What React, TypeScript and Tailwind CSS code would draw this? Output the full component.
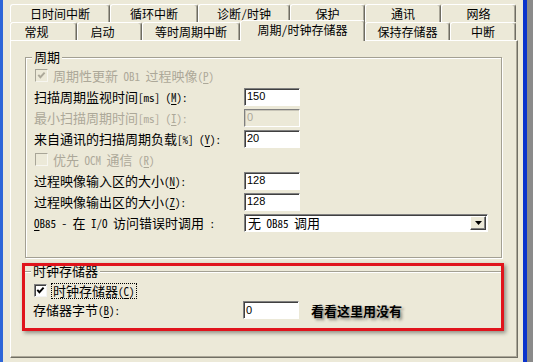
import React from "react";

const U = ({ c }: { c: string }) => (
  <span className="underline decoration-1 underline-offset-[2px]">{c}</span>
);

const L = ({ children }: { children: React.ReactNode }) => (
  <span className="text-[11px]">{children}</span>
);

function Check({ disabled, checked }: { disabled?: boolean; checked?: boolean }) {
  return (
    <span
      className={
        disabled
          ? "flex h-[13px] w-[13px] shrink-0 items-center justify-center border border-t-[#A8A597] border-l-[#A8A597] border-r-[#F7F6F0] border-b-[#F7F6F0] bg-[#ECE9D8]"
          : "flex h-[13px] w-[13px] shrink-0 items-center justify-center border border-t-[#808080] border-l-[#808080] border-r-[#F4F4F4] border-b-[#F4F4F4] bg-white shadow-[inset_1px_1px_0_#404040]"
      }
    >
      {checked && (
        <svg width="9" height="9" viewBox="0 0 9 9">
          <path
            d="M1.3 3.8 L3.4 6.2 L7.6 1.6"
            fill="none"
            stroke={disabled ? "#ACA899" : "#000000"}
            strokeWidth="1.9"
          />
        </svg>
      )}
    </span>
  );
}

function Field({ value, disabled }: { value: string; disabled?: boolean }) {
  return (
    <div
      className={
        disabled
          ? "flex h-[18px] w-[56px] items-center border border-t-[#808080] border-l-[#808080] border-r-[#FFFFFF] border-b-[#FFFFFF] bg-[#ECE9D8] pl-[2px] font-['Liberation_Sans',sans-serif] text-[11px] text-[#ACA899] shadow-[inset_1px_1px_0_#C8C5B8]"
          : "flex h-[18px] w-[56px] items-center border border-t-[#808080] border-l-[#808080] border-r-[#FFFFFF] border-b-[#FFFFFF] bg-white pl-[2px] font-['Liberation_Sans',sans-serif] text-[11px] text-black shadow-[inset_1px_1px_0_#404040]"
      }
    >
      {value}
    </div>
  );
}

function Row({ children }: { children: React.ReactNode }) {
  return <div className="flex h-[21px] items-center">{children}</div>;
}

function Label({ children, disabled }: { children: React.ReactNode; disabled?: boolean }) {
  return (
    <div className={disabled ? "w-[210px] shrink-0 whitespace-nowrap text-[#ACA899]" : "w-[210px] shrink-0 whitespace-nowrap text-black"}>
      {children}
    </div>
  );
}

const row1 = [
  { w: "w-[100px]", t: "日时间中断" },
  { w: "w-[88px]", t: "循环中断" },
  { w: "w-[92px]", t: "诊断/时钟" },
  { w: "w-[75px]", t: "保护" },
  { w: "w-[76px]", t: "通讯" },
  { w: "w-[75px]", t: "网络" },
];

function Tab({ w, t, pr }: { w: string; t: string; pr?: string }) {
  return (
    <div
      className={`${w} ${pr ?? ""} flex h-[18px] shrink-0 items-center justify-center rounded-t-[3px] border-l border-t border-r border-l-white border-t-white border-r-[#6E6C62] bg-[#ECE9D8] text-[12px] leading-none text-black shadow-[inset_-1px_0_0_#A9A698]`}
    >
      {t}
    </div>
  );
}

export default function App() {
  return (
    <div className="flex h-[362px] w-[533px] overflow-hidden bg-[#ECE9D8] font-['Noto_Sans_Mono_CJK_SC','Noto_Sans_CJK_SC','Noto_Sans',sans-serif] text-[13px] leading-[17px] text-black">
      <div className="w-[3px] shrink-0 bg-[#2E66D8]" />
      <div className="w-[520px] shrink-0 pl-[7px] pt-[4px]">
        {/* tab row 1 */}
        <div className="flex h-[18px] w-[508px]">
          {row1.map((r) => (
            <Tab key={r.t} w={r.w} t={r.t} />
          ))}
        </div>
        {/* tab row 2 */}
        <div className="flex h-[18px] w-[508px] items-start">
          <Tab w="w-[67px]" t="常规" pr="pr-[14px]" />
          <Tab w="w-[65px]" t="启动" pr="pr-[14px]" />
          <Tab w="w-[98px]" t="等时周期中断" />
          <div className="relative z-10 -mt-[2px] flex h-[21px] w-[125px] shrink-0 justify-center rounded-t-[3px] border-l border-t border-r border-l-white border-t-white border-r-[#6E6C62] bg-[#ECE9D8] pt-[2px] text-[12px] leading-[14px] text-black shadow-[inset_-1px_0_0_#A9A698]">
            周期/时钟存储器
          </div>
          <Tab w="w-[85px]" t="保持存储器" />
          <Tab w="w-[66px]" t="中断" />
        </div>
        {/* panel */}
        <div className="h-[318px] w-[508px] border-l border-t border-r border-b border-l-white border-t-white border-r-[#716F64] border-b-[#716F64] shadow-[inset_-1px_-1px_0_#ACA899]">
          {/* group 1 */}
          <div className="ml-[14px] mt-[16px] h-[201px] w-[477px] border border-[#A3A093] shadow-[inset_1px_1px_0_#FFFFFF,1px_1px_0_#FFFFFF]">
            <div className="-mt-[10px] ml-[6px] w-fit bg-[#ECE9D8] px-[2px] leading-[17px]">周期</div>
            <div className="pl-[8px]">
              <Row>
                <div className="flex items-center gap-[5px] pl-[1px] text-[#ACA899]">
                  <Check disabled checked />
                  <span>
                    周期性更新<L> OB1 </L>过程映像<L>(<U c="P" />)</L>
                  </span>
                </div>
              </Row>
              <Row>
                <Label>
                  扫描周期监视时间<L>[ms] (<U c="M" />):</L>
                </Label>
                <Field value="150" />
              </Row>
              <Row>
                <Label disabled>
                  最小扫描周期时间<L>[ms] (<U c="I" />):</L>
                </Label>
                <Field value="0" disabled />
              </Row>
              <Row>
                <Label>
                  来自通讯的扫描周期负载<L>[%] (<U c="Y" />):</L>
                </Label>
                <Field value="20" />
              </Row>
              <Row>
                <div className="flex items-center gap-[5px] pl-[1px] text-[#ACA899]">
                  <Check disabled />
                  <span>
                    优先<L> OCM </L>通信<L> (<U c="R" />)</L>
                  </span>
                </div>
              </Row>
              <Row>
                <Label>
                  过程映像输入区的大小<L>(<U c="N" />):</L>
                </Label>
                <Field value="128" />
              </Row>
              <Row>
                <Label>
                  过程映像输出区的大小<L>(<U c="Z" />):</L>
                </Label>
                <Field value="128" />
              </Row>
              <Row>
                <Label>
                  <L><U c="O" />B85 - </L>在<L> I/O </L>访问错误时调用<L> :</L>
                </Label>
                <div className="flex h-[18px] w-[244px] items-center justify-between border border-t-[#808080] border-l-[#808080] border-r-white border-b-white bg-white pl-[3px] pr-[1px] shadow-[inset_1px_1px_0_#404040]">
                  <span>
                    无<L> OB85 </L>调用
                  </span>
                  <span className="flex h-[14px] w-[16px] items-center justify-center border border-l-white border-t-white border-r-[#404040] border-b-[#404040] bg-[#ECE9D8] shadow-[inset_-1px_-1px_0_#808080]">
                    <svg width="7" height="4" viewBox="0 0 7 4">
                      <path d="M0 0 H7 L3.5 4 Z" fill="#000" />
                    </svg>
                  </span>
                </div>
              </Row>
            </div>
          </div>
          {/* group 2 */}
          <div className="relative ml-[14px] mt-[13px] h-[57px] w-[477px] border-t border-[#A3A093] shadow-[inset_0_1px_0_#FFFFFF]">
            <div className="-mt-[10px] ml-[6px] w-fit bg-[#ECE9D8] px-[2px] leading-[17px]">时钟存储器</div>
            <div className="pl-[8px] pt-[2px]">
              <div className="flex h-[19px] items-center gap-[4px] pl-[1px]">
                <Check checked />
                <span className="border border-dotted border-black px-[1px] leading-[13px]">
                  时钟存储器<L>(<U c="C" />)</L>
                </span>
              </div>
              <div className="flex h-[20px] items-center">
                <Label>
                  存储器字节<L>(<U c="B" />):</L>
                </Label>
                <Field value="0" />
                <span className="ml-[12px] font-bold text-black [text-shadow:2px_2px_3px_rgba(0,0,0,0.45)]">
                  看看这里用没有
                </span>
              </div>
            </div>
            <div className="pointer-events-none absolute -bottom-[3px] -left-[3px] -right-[2px] -top-[9px] border-[3px] border-[#E0141C] shadow-[2px_2px_4px_rgba(0,0,0,0.4)]" />
          </div>
        </div>
      </div>
      <div className="w-[4px] shrink-0 bg-[#0A33CC]" />
      <div className="w-[6px] shrink-0 bg-[#8A8A8A]" />
    </div>
  );
}
